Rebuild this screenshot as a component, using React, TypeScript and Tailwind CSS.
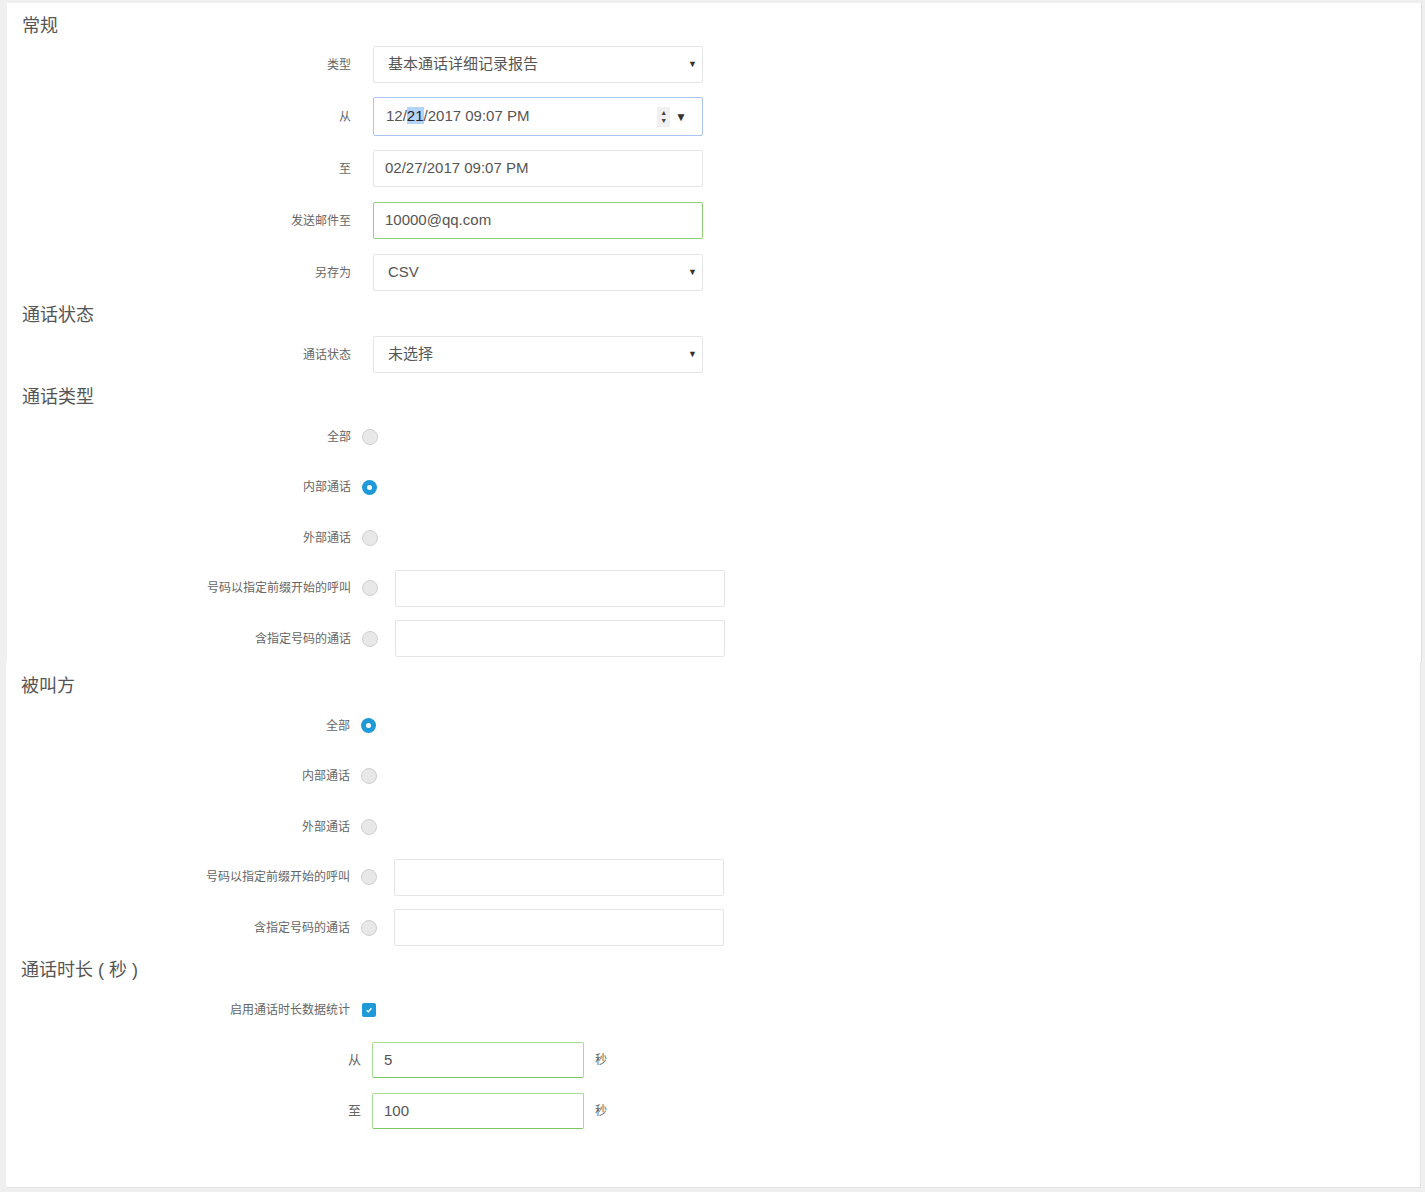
import React from 'react';

const cjk = { fontFamily: '"Liberation Sans", "Noto Sans CJK SC", sans-serif' };

function Heading({ children }: { children: React.ReactNode }) {
  return (
    <div className="h-[25px] pl-[15px] text-[18px] leading-[25px] text-[#555]">{children}</div>
  );
}

function FieldLabel({ children, width = 'w-[344px]' }: { children: React.ReactNode; width?: string }) {
  return <div className={`${width} shrink-0 text-right text-[12px] text-[#666]`}>{children}</div>;
}

function SelectBox({ value }: { value: string }) {
  return (
    <div className="ml-[22px] flex h-[37px] w-[330px] items-center justify-between rounded-[2px] border border-[#e5e5e5] bg-white pl-[14px] pr-[5px] text-[15px] text-[#555]">
      <span>{value}</span>
      <span className="text-[9px] text-[#333]">▼</span>
    </div>
  );
}

function TextBox({ value, border = 'border-[#e5e5e5]' }: { value: string; border?: string }) {
  return (
    <div className={`ml-[22px] flex h-[37px] w-[330px] items-center rounded-[2px] border ${border} bg-white pl-[11px] text-[15px] text-[#555]`}>
      {value}
    </div>
  );
}

function Radio({ checked }: { checked?: boolean }) {
  if (checked) {
    return (
      <div className="ml-[11px] flex h-[15px] w-[15px] shrink-0 items-center justify-center rounded-full bg-[#1e9ad9]">
        <div className="h-[5px] w-[5px] rounded-full bg-white" />
      </div>
    );
  }
  return <div className="ml-[11px] h-[16px] w-[16px] shrink-0 rounded-full border border-[#d0d0d0] bg-[#e8e8e8]" />;
}

function RadioRow({ label, checked, withInput }: { label: string; checked?: boolean; withInput?: boolean }) {
  return (
    <div className="flex h-[37px] items-center">
      <FieldLabel>{label}</FieldLabel>
      <Radio checked={checked} />
      {withInput && (
        <div className="ml-[17px] h-[37px] w-[330px] rounded-[2px] border border-[#e5e5e5] bg-white" />
      )}
    </div>
  );
}

export default function App() {
  return (
    <div className="min-h-[1192px] bg-[#efefef] pt-[3px]" style={cjk}>
      <div className="ml-[7px] w-[1415px] border-r border-[#dcdcdc] bg-white pt-[11px] pb-[1px]">
        <Heading>常规</Heading>
        <div className="mt-[7px] flex flex-col gap-[15px]">
          <div className="flex h-[37px] items-center">
            <FieldLabel>类型</FieldLabel>
            <SelectBox value="基本通话详细记录报告" />
          </div>
          <div className="flex h-[37px] items-center">
            <FieldLabel>从</FieldLabel>
            <div className="ml-[22px] flex h-[39px] w-[330px] items-center justify-between rounded-[2px] border border-[#a9c3f2] bg-white pl-[12px] pr-[15px] text-[15px] text-[#555]">
              <span>
                12/<span className="bg-[#b4d3fb] text-[#222]">21</span>/2017 09:07 PM
              </span>
              <span className="flex items-center gap-[5px]">
                <span className="flex h-[20px] w-[13px] flex-col items-center justify-center bg-[#f0f0f0] text-[7px] leading-[8px] text-[#444]">
                  <span>▲</span>
                  <span>▼</span>
                </span>
                <span className="text-[12px] text-[#333]">▼</span>
              </span>
            </div>
          </div>
          <div className="flex h-[37px] items-center">
            <FieldLabel>至</FieldLabel>
            <TextBox value="02/27/2017 09:07 PM" />
          </div>
          <div className="flex h-[37px] items-center">
            <FieldLabel>发送邮件至</FieldLabel>
            <TextBox value="10000@qq.com" border="border-[#8fd27a]" />
          </div>
          <div className="flex h-[37px] items-center">
            <FieldLabel>另存为</FieldLabel>
            <SelectBox value="CSV" />
          </div>
        </div>

        <div className="mt-[12px]">
          <Heading>通话状态</Heading>
        </div>
        <div className="mt-[8px] flex h-[37px] items-center">
          <FieldLabel>通话状态</FieldLabel>
          <SelectBox value="未选择" />
        </div>

        <div className="mt-[12px]">
          <Heading>通话类型</Heading>
        </div>
        <div className="mt-[8px] mb-[4px] flex flex-col gap-[13.5px]">
          <RadioRow label="全部" />
          <RadioRow label="内部通话" checked />
          <RadioRow label="外部通话" />
          <RadioRow label="号码以指定前缀开始的呼叫" withInput />
          <RadioRow label="含指定号码的通话" withInput />
        </div>
      </div>

      <div className="ml-[6px] w-[1415px] border-r border-b border-[#e3e3e3] bg-white pt-[12px] pb-[58px]">
        <Heading>被叫方</Heading>
        <div className="mt-[8px] flex flex-col gap-[13.5px]">
          <RadioRow label="全部" checked />
          <RadioRow label="内部通话" />
          <RadioRow label="外部通话" />
          <RadioRow label="号码以指定前缀开始的呼叫" withInput />
          <RadioRow label="含指定号码的通话" withInput />
        </div>

        <div className="mt-[12px]">
          <Heading>通话时长 ( 秒 )</Heading>
        </div>
        <div className="mt-[8px] flex h-[37px] items-center">
          <FieldLabel>启用通话时长数据统计</FieldLabel>
          <div className="ml-[12px] flex h-[14px] w-[14px] items-center justify-center rounded-[2px] bg-[#1e9ad9]">
            <svg viewBox="0 0 10 10" className="h-[8px] w-[8px]">
              <path d="M2 5.2 L4.2 7.2 L8 2.8" fill="none" stroke="white" strokeWidth="1.6" />
            </svg>
          </div>
        </div>
        <div className="mt-[14px] flex flex-col gap-[15px]">
          {[
            ['从', '5'],
            ['至', '100'],
          ].map(([label, value]) => (
            <div key={label} className="flex h-[36px] items-center">
              <FieldLabel width="w-[355px]">
                <span className="text-[13px]">{label}</span>
              </FieldLabel>
              <div className="ml-[11px] flex h-[36px] w-[212px] items-center rounded-[2px] border border-[#a8dc94] border-b-[#7cc663] bg-white pl-[11px] text-[15px] text-[#555]">
                {value}
              </div>
              <span className="ml-[11px] text-[12px] text-[#666]">秒</span>
            </div>
          ))}
        </div>
      </div>
    </div>
  );
}
